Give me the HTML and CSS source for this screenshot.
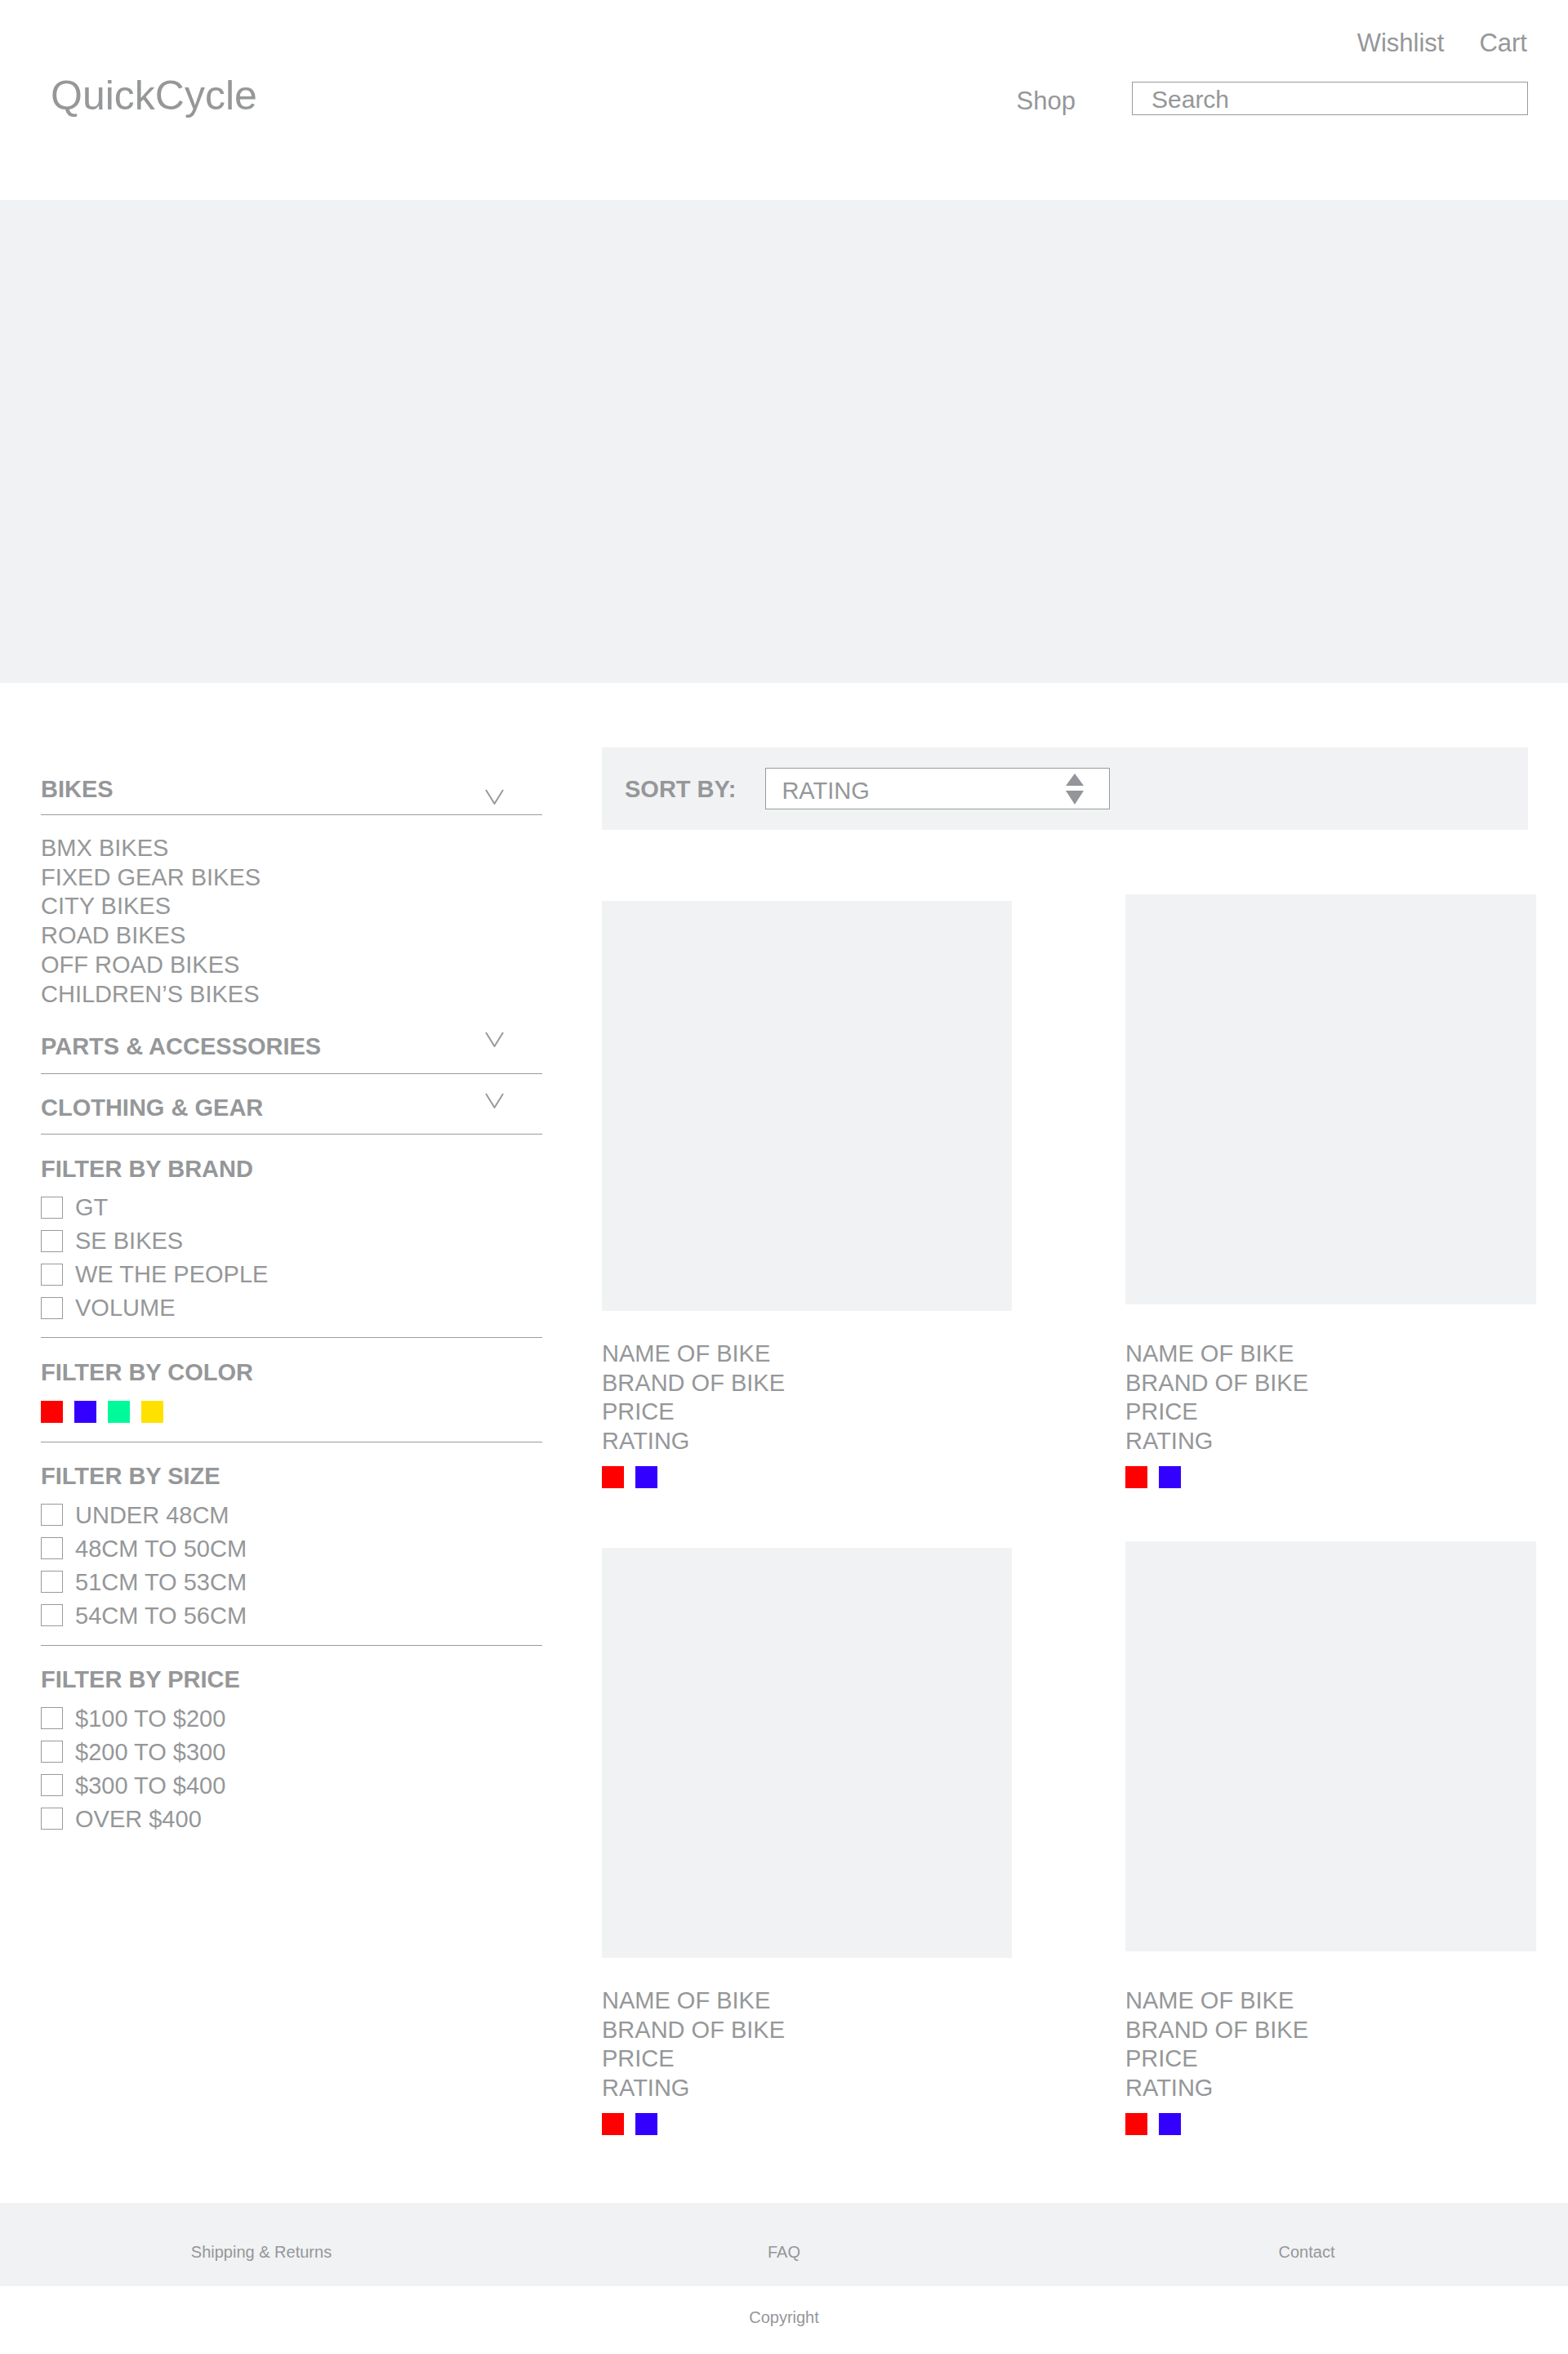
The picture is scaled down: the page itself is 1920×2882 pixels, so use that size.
FILE: index.html
```html
<!DOCTYPE html>
<html lang="en">
<head>
<meta charset="utf-8">
<title>QuickCycle</title>
<link rel="stylesheet" href="styles.css">
</head>
<body>
<header class="header">
  <nav class="util-nav">
    <a class="util-link" href="#">Wishlist</a>
    <a class="util-link" href="#">Cart</a>
  </nav>
  <div class="header-main">
    <div class="logo">QuickCycle</div>
    <div class="header-right">
      <a class="shop" href="#">Shop</a>
      <div class="search"><span class="search-text">Search</span></div>
    </div>
  </div>
</header>

<section class="hero"></section>

<div class="content">
  <aside class="sidebar">
    <div class="cat">
      <div class="cat-head cat-head--open">
        <span class="cat-title">BIKES</span>
        <svg class="chev" viewBox="0 0 23 19"><polyline points="1,1 11.5,18 22,1" fill="none" stroke="#9a9a9a" stroke-width="2"/></svg>
      </div>
      <ul class="cat-list">
        <li>BMX BIKES</li>
        <li>FIXED GEAR BIKES</li>
        <li>CITY BIKES</li>
        <li>ROAD BIKES</li>
        <li>OFF ROAD BIKES</li>
        <li>CHILDREN’S BIKES</li>
      </ul>
    </div>
    <div class="cat">
      <div class="cat-head">
        <span class="cat-title">PARTS &amp; ACCESSORIES</span>
        <svg class="chev" viewBox="0 0 23 19"><polyline points="1,1 11.5,18 22,1" fill="none" stroke="#9a9a9a" stroke-width="2"/></svg>
      </div>
    </div>
    <div class="cat">
      <div class="cat-head">
        <span class="cat-title">CLOTHING &amp; GEAR</span>
        <svg class="chev" viewBox="0 0 23 19"><polyline points="1,1 11.5,18 22,1" fill="none" stroke="#9a9a9a" stroke-width="2"/></svg>
      </div>
    </div>

    <div class="filter">
      <div class="filter-title">FILTER BY BRAND</div>
      <div class="check-row"><span class="box"></span>GT</div>
      <div class="check-row"><span class="box"></span>SE BIKES</div>
      <div class="check-row"><span class="box"></span>WE THE PEOPLE</div>
      <div class="check-row"><span class="box"></span>VOLUME</div>
    </div>
    <div class="filter filter--color">
      <div class="filter-title">FILTER BY COLOR</div>
      <div class="swatches">
        <span class="swatch swatch--red"></span>
        <span class="swatch swatch--blue"></span>
        <span class="swatch swatch--green"></span>
        <span class="swatch swatch--yellow"></span>
      </div>
    </div>
    <div class="filter">
      <div class="filter-title">FILTER BY SIZE</div>
      <div class="check-row"><span class="box"></span>UNDER 48CM</div>
      <div class="check-row"><span class="box"></span>48CM TO 50CM</div>
      <div class="check-row"><span class="box"></span>51CM TO 53CM</div>
      <div class="check-row"><span class="box"></span>54CM TO 56CM</div>
    </div>
    <div class="filter">
      <div class="filter-title">FILTER BY PRICE</div>
      <div class="check-row"><span class="box"></span>$100 TO $200</div>
      <div class="check-row"><span class="box"></span>$200 TO $300</div>
      <div class="check-row"><span class="box"></span>$300 TO $400</div>
      <div class="check-row"><span class="box"></span>OVER $400</div>
    </div>
  </aside>

  <main class="main">
    <div class="sortbar">
      <span class="sort-label">SORT BY:</span>
      <div class="select">
        <span class="select-value">RATING</span>
        <svg class="select-arrows" viewBox="0 0 22 38"><polygon points="11,0 22,15 0,15" fill="#939598"/><polygon points="0,21 22,21 11,38" fill="#939598"/></svg>
      </div>
    </div>

    <div class="grid">
      <article class="card">
        <div class="card-media"><div class="card-img card-img--low"></div></div>
        <div class="card-info">
          <div>NAME OF BIKE</div>
          <div>BRAND OF BIKE</div>
          <div>PRICE</div>
          <div>RATING</div>
        </div>
        <div class="swatches card-swatches"><span class="swatch swatch--red"></span><span class="swatch swatch--blue"></span></div>
      </article>
      <article class="card">
        <div class="card-media"><div class="card-img"></div></div>
        <div class="card-info">
          <div>NAME OF BIKE</div>
          <div>BRAND OF BIKE</div>
          <div>PRICE</div>
          <div>RATING</div>
        </div>
        <div class="swatches card-swatches"><span class="swatch swatch--red"></span><span class="swatch swatch--blue"></span></div>
      </article>
      <article class="card">
        <div class="card-media"><div class="card-img card-img--low"></div></div>
        <div class="card-info">
          <div>NAME OF BIKE</div>
          <div>BRAND OF BIKE</div>
          <div>PRICE</div>
          <div>RATING</div>
        </div>
        <div class="swatches card-swatches"><span class="swatch swatch--red"></span><span class="swatch swatch--blue"></span></div>
      </article>
      <article class="card">
        <div class="card-media"><div class="card-img"></div></div>
        <div class="card-info">
          <div>NAME OF BIKE</div>
          <div>BRAND OF BIKE</div>
          <div>PRICE</div>
          <div>RATING</div>
        </div>
        <div class="swatches card-swatches"><span class="swatch swatch--red"></span><span class="swatch swatch--blue"></span></div>
      </article>
    </div>
  </main>
</div>

<footer class="footer">
  <div class="footer-links">
    <a href="#">Shipping &amp; Returns</a>
    <a href="#">FAQ</a>
    <a href="#">Contact</a>
  </div>
  <div class="copyright">Copyright</div>
</footer>
</body>
</html>
```
FILE: styles.css
```css
* {
  box-sizing: border-box;
  margin: 0;
  padding: 0;
}

body {
  margin: 0;
  width: 1920px;
  background: #ffffff;
  color: #959799;
  font-family: "Liberation Sans", Arial, Helvetica, sans-serif;
}

a {
  color: inherit;
  text-decoration: none;
}

/* Header */
.header {
  height: 245px;
  padding: 35px 50px 0 62px;
}

.util-nav {
  display: flex;
  justify-content: flex-end;
  gap: 43px;
  font-size: 31px;
  line-height: 36px;
}

.header-main {
  display: flex;
  justify-content: space-between;
  align-items: flex-start;
}

.logo {
  font-size: 50px;
  line-height: 58px;
  margin-top: 17px;
}

.header-right {
  display: flex;
  align-items: flex-start;
  margin-right: -1px;
}

.shop {
  font-size: 31px;
  line-height: 36px;
  margin-top: 35px;
  margin-right: 69px;
}

.search {
  width: 485px;
  height: 41px;
  margin-top: 29px;
  border: 1px solid #9a9a9a;
  padding: 0 0 0 23px;
  display: flex;
  align-items: center;
  font-size: 30px;
  line-height: 34px;
}

.search-text {
  margin-top: 3px;
}

/* Hero */
.hero {
  height: 591px;
  background: #f1f2f4;
}

/* Content */
.content {
  display: flex;
  align-items: flex-start;
  padding: 0 0 83px 50px;
}

.sidebar {
  flex: none;
  width: 614px;
  padding-top: 115px;
}

.cat + .cat {
  margin-top: 26px;
}

.cat-head {
  display: flex;
  justify-content: space-between;
  align-items: flex-start;
  padding-bottom: 17.5px;
  border-bottom: 1px solid #9b9b9b;
}

.cat-head--open {
  padding-bottom: 16px;
}

.cat-title {
  font-size: 29px;
  font-weight: bold;
  line-height: 30px;
}

.chev {
  flex: none;
  width: 23px;
  height: 19px;
  margin-right: 47px;
  margin-top: -3px;
}

.cat-head--open .chev {
  margin-top: 15px;
  margin-bottom: -4px;
}

.cat-list {
  list-style: none;
  margin-top: 23px;
  padding-bottom: 5px;
  font-size: 29px;
  line-height: 35.7px;
}

.filter {
  padding: 26.5px 0 15.5px;
  border-bottom: 1px solid #9b9b9b;
}

.filter:last-child {
  border-bottom: none;
}

.filter-title {
  font-size: 29px;
  font-weight: bold;
  line-height: 30px;
  margin-bottom: 12px;
}

.filter--color {
  padding-bottom: 23px;
}

.filter--color .filter-title {
  margin-bottom: 20px;
}

.check-row {
  height: 41px;
  display: flex;
  align-items: center;
  font-size: 29px;
  line-height: 30px;
}

.box {
  flex: none;
  width: 27px;
  height: 27px;
  border: 1px solid #9a9a9a;
  margin-right: 15px;
}

.swatches {
  display: flex;
  gap: 14px;
}

.swatch {
  display: block;
  width: 27px;
  height: 27px;
}

.swatch--red { background: #ff0000; }
.swatch--blue { background: #3300ff; }
.swatch--green { background: #00fa9a; }
.swatch--yellow { background: #ffe100; }

/* Main */
.main {
  margin-left: 73px;
  padding-top: 79px;
}

.sortbar {
  width: 1134px;
  height: 101px;
  background: #f1f2f4;
  display: flex;
  align-items: center;
  gap: 36px;
  padding-left: 28px;
}

.sort-label {
  font-size: 29px;
  font-weight: bold;
  line-height: 30px;
}

.select {
  width: 422px;
  height: 51px;
  background: #ffffff;
  border: 1px solid #9a9a9a;
  display: flex;
  align-items: center;
  justify-content: space-between;
  padding: 0 31px 0 19px;
  font-size: 29px;
  line-height: 30px;
}

.select-value {
  margin-top: 4px;
}

.select-arrows {
  width: 22px;
  height: 38px;
  margin-top: 1px;
}

.grid {
  display: grid;
  grid-template-columns: 502px 503px;
  column-gap: 139px;
  row-gap: 65px;
  margin-top: 79px;
}

.card-media {
  display: flow-root;
  height: 510px;
}

.card-img {
  height: 502px;
  background: #f1f2f4;
}

.card-img--low {
  margin-top: 8px;
}

.card-info {
  margin-top: 35px;
  font-size: 29px;
  line-height: 35.7px;
}

.card-swatches {
  margin-top: 12px;
}

/* Footer */
.footer-links {
  height: 102px;
  padding-top: 48px;
  background: #f1f2f4;
  display: grid;
  grid-template-columns: 1fr 1fr 1fr;
  text-align: center;
  font-size: 20px;
  line-height: 24px;
}

.copyright {
  text-align: center;
  font-size: 20px;
  line-height: 24px;
  padding: 26px 0 33px;
}
```
